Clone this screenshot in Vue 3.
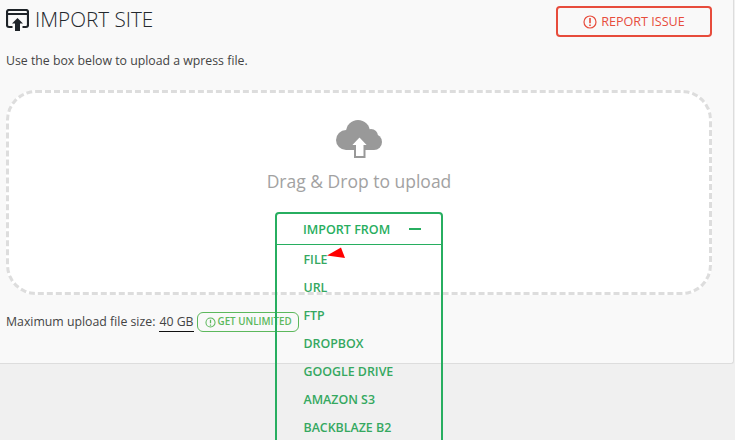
<template>
  <div class="page">
    <section class="panel">
      <header class="head">
        <h1 class="title">
          <svg class="title-icon" width="23" height="22" viewBox="0 0 23 22">
            <path d="M6.500 18H3A2 2 0 0 1 1 16V3A2 2 0 0 1 3 1H20A2 2 0 0 1 22 3V16A2 2 0 0 1 20 18H16.500" fill="none" stroke="#1e2328" stroke-width="2.200" />
            <path d="M1.500 5H21.500" stroke="#1e2328" stroke-width="2" />
            <path d="M11.500 9L17 14.500H14V22H9V14.500H6Z" fill="#1e2328" />
          </svg>
          <span>IMPORT SITE</span>
        </h1>
        <a class="report">
          <svg width="14" height="14" viewBox="0 0 14 14">
            <circle cx="7" cy="7" r="6" fill="none" stroke="#e74c3c" stroke-width="1.200" />
            <path d="M7 3V8.200M7 9.400V11" stroke="#e74c3c" stroke-width="1.600" />
          </svg>
          REPORT ISSUE
        </a>
      </header>

      <p class="hint">Use the box below to upload a wpress file.</p>

      <div class="dropzone">
        <svg class="cloud" width="48" height="40" viewBox="0 0 48 40">
          <g fill="#999">
            <circle cx="11" cy="21" r="10" />
            <circle cx="23" cy="13" r="12" />
            <circle cx="36" cy="17" r="7" />
            <circle cx="39" cy="23" r="8" />
            <rect x="11" y="15" width="28" height="16" />
          </g>
          <path d="M24.500 17L34 27H29.500V38H20V27H15Z" fill="#fff" stroke="#999" stroke-width="2" />
        </svg>
        <div class="drop-text">Drag &amp; Drop to upload</div>
      </div>

      <p class="limit">
        <span>Maximum upload file size:</span>
        <span class="size">40 GB</span>
        <a class="unlimited">
          <svg width="11" height="11" viewBox="0 0 14 14">
            <circle cx="7" cy="7" r="5.800" fill="none" stroke="#5cb85c" stroke-width="1.300" />
            <path d="M7 3.500V8M7 9.500V11" stroke="#5cb85c" stroke-width="1.600" />
          </svg>
          GET UNLIMITED
        </a>
      </p>

      <div class="menu">
        <div class="menu-head">
          <span>IMPORT FROM</span>
          <i class="minus"></i>
        </div>
        <ul class="menu-list">
          <li v-for="item in sources" :key="item">{{ item }}</li>
        </ul>
      </div>

      <svg class="pointer" width="20" height="12" viewBox="0 0 20 12">
        <path d="M0 8.500L14 0.500L18 11Z" fill="#f00" />
      </svg>
    </section>
  </div>
</template>

<script setup>
const sources = ['FILE', 'URL', 'FTP', 'DROPBOX', 'GOOGLE DRIVE', 'AMAZON S3', 'BACKBLAZE B2']
</script>

<style>
html,
body {
  margin: 0;
  background: #f0f0f0;
}
</style>

<style scoped>
.page {
  width: 735px;
  height: 440px;
  overflow: hidden;
  font-family: 'Open Sans', 'Noto Sans', sans-serif;
}

.panel {
  position: relative;
  box-sizing: border-box;
  width: 734px;
  height: 364px;
  padding: 0 21px 0 6px;
  background: #f9f9f9;
  border-right: 1px solid #ddd;
  border-bottom: 1px solid #ddd;
  border-bottom-right-radius: 3px;
}

.head {
  display: flex;
  justify-content: space-between;
  align-items: flex-start;
  height: 52px;
}

.title {
  display: flex;
  align-items: center;
  gap: 6px;
  margin: 6px 0 0;
  font-size: 20.700px;
  line-height: 27px;
  font-weight: 300;
  color: #23282d;
}

.report {
  display: flex;
  align-items: center;
  justify-content: center;
  gap: 4px;
  box-sizing: border-box;
  width: 156px;
  height: 31px;
  margin-top: 6px;
  border: 2px solid #e74c3c;
  border-radius: 4px;
  font-size: 12.600px;
  color: #e74c3c;
}

.hint {
  margin: 1px 0 0;
  height: 37px;
  font-size: 12.300px;
  line-height: 16px;
  color: #444;
}

.dropzone {
  display: flex;
  flex-direction: column;
  align-items: center;
  box-sizing: border-box;
  width: 706px;
  height: 205px;
  padding-top: 26px;
  background: #fff;
  border: 3px dashed #ddd;
  border-radius: 30px;
}

.cloud {
  display: block;
}

.drop-text {
  margin-top: 10px;
  font-size: 17.500px;
  line-height: 24px;
  color: #a2a2a2;
}

.limit {
  display: flex;
  align-items: center;
  margin: 17px 0 0;
  font-size: 12.300px;
  line-height: 18px;
  color: #444;
}

.size {
  margin-left: 4px;
  color: #444;
  border-bottom: 1px solid #111;
}

.unlimited {
  display: flex;
  align-items: center;
  gap: 2px;
  box-sizing: border-box;
  height: 20px;
  margin-left: 3px;
  padding: 0 6px 0 7px;
  border: 1px solid #5cb85c;
  border-radius: 6px;
  font-size: 9.800px;
  font-weight: 600;
  color: #5cb85c;
}

.menu {
  position: absolute;
  top: 212px;
  left: 275px;
  box-sizing: border-box;
  width: 168px;
  height: 240px;
  border: 2px solid #27ae60;
  border-radius: 4px;
}

.menu-head {
  display: flex;
  justify-content: space-between;
  align-items: center;
  height: 30px;
  padding: 0 20px 0 26px;
  border-bottom: 1px solid #27ae60;
  font-size: 12.500px;
  font-weight: 600;
  color: #27ae60;
}

.minus {
  display: block;
  width: 12px;
  height: 2px;
  background: #27ae60;
}

.menu-list {
  margin: 1px 0 0;
  padding: 0 0 0 26.500px;
  list-style: none;
  font-size: 12.400px;
  font-weight: 600;
  line-height: 28px;
  color: #35a860;
}

.pointer {
  position: absolute;
  top: 247px;
  left: 327px;
}
</style>
